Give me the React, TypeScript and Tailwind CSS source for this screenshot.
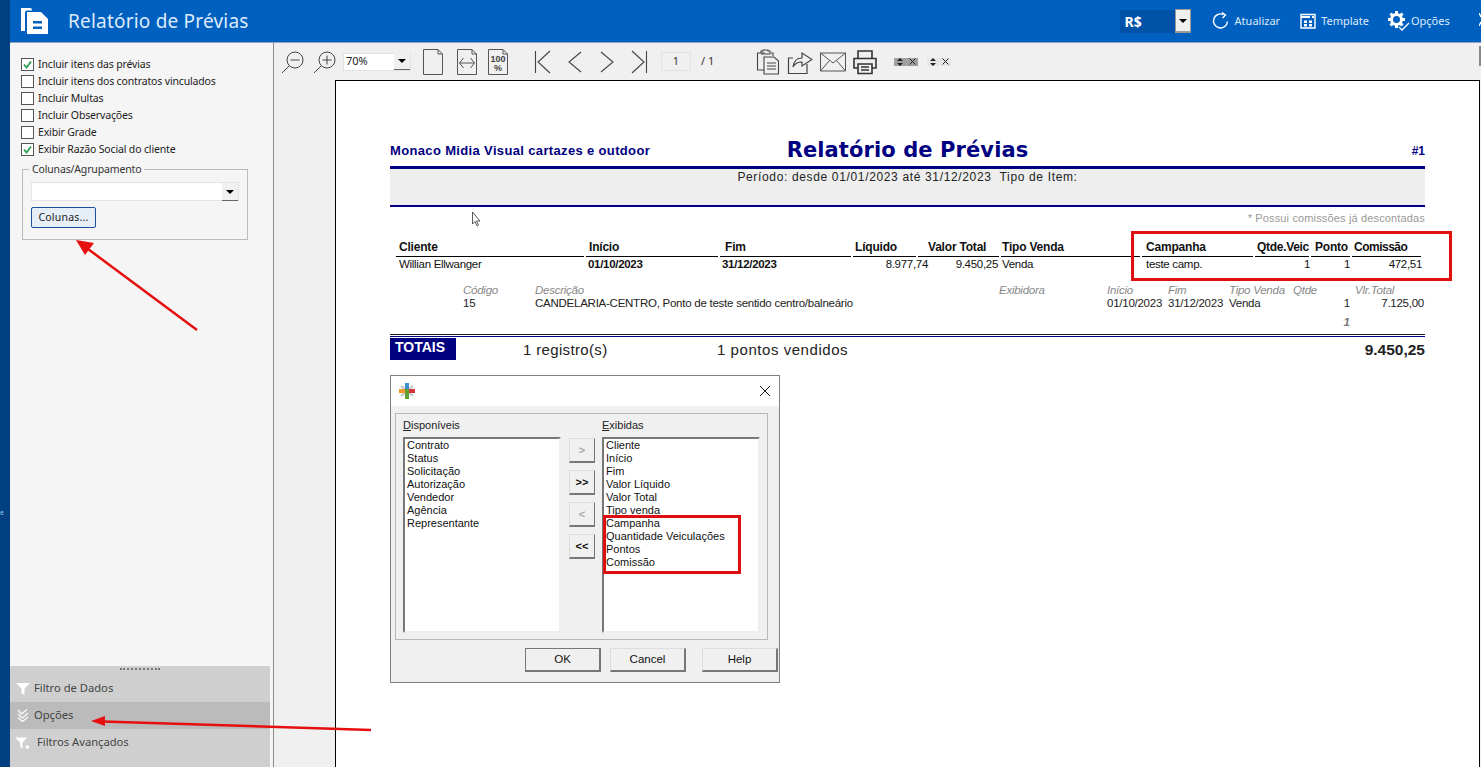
import type { ReactNode } from "react";

const reportCols = "grid-cols-[190px_134px_133px_65px_83px_141px_113px_56px_41px_71px]";
const itemCols = "grid-cols-[72px_464px_108px_61px_61px_64px_62px_69px]";

const options = [
  { label: "Incluir itens das prévias", checked: true },
  { label: "Incluir itens dos contratos vinculados", checked: false },
  { label: "Incluir Multas", checked: false },
  { label: "Incluir Observações", checked: false },
  { label: "Exibir Grade", checked: false },
  { label: "Exibir Razão Social do cliente", checked: true },
];

const available = ["Contrato", "Status", "Solicitação", "Autorização", "Vendedor", "Agência", "Representante"];
const shown = [
  "Cliente",
  "Início",
  "Fim",
  "Valor Líquido",
  "Valor Total",
  "Tipo venda",
  "Campanha",
  "Quantidade Veiculações",
  "Pontos",
  "Comissão",
];

function Check({ label, checked }: { label: string; checked: boolean }) {
  return (
    <div className="flex items-center h-[17px] text-[10.5px] tracking-[-0.15px] text-[#222]">
      <span className="flex items-center justify-center w-[13px] h-[13px] border border-[#555] bg-white mr-[4px]">
        {checked && (
          <svg width="11" height="11" viewBox="0 0 11 11">
            <path d="M2 5.5 L4.5 8.5 L9 2.5" fill="none" stroke="#2e9e4f" strokeWidth="1.8" />
          </svg>
        )}
      </span>
      {label}
    </div>
  );
}

function HeadCell({ children, inset }: { children?: ReactNode; inset?: string }) {
  return (
    <div className="mr-[2px] pl-[3px] h-[17px] leading-[15px] border-b border-black font-bold text-[12px] tracking-[-0.2px] text-[#111] whitespace-nowrap">
      <span className={inset}>{children}</span>
    </div>
  );
}

function Lens({ plus }: { plus?: boolean }) {
  return (
    <svg width="24" height="24" viewBox="0 0 24 24" fill="none" stroke="#444" strokeWidth="1">
      <circle cx="14" cy="10" r="8" />
      <path d="M8 16 L1 23" />
      <path d="M9.5 10 H18.5" />
      {plus && <path d="M14 5.5 V14.5" />}
    </svg>
  );
}

function PageIcon({ children }: { children?: ReactNode }) {
  return (
    <svg width="22" height="28" viewBox="0 0 22 28" fill="none" stroke="#555" strokeWidth="1">
      <path d="M1.5 1.5 H16 L20.5 6 V26.5 H1.5 Z M16 1.5 V6 H20.5" />
      {children}
    </svg>
  );
}

function SortClose({ shade }: { shade: string }) {
  return (
    <div className={`flex items-center justify-center gap-[6px] w-[24px] h-[8px] ${shade}`}>
      <svg width="6" height="8" viewBox="0 0 6 8" fill="#222">
        <path d="M3 0 L6 3 H0 Z M3 8 L0 5 H6 Z" />
      </svg>
      <svg width="7" height="7" viewBox="0 0 7 7" stroke="#222" strokeWidth="1">
        <path d="M.5 .5 L6.5 6.5 M6.5 .5 L.5 6.5" />
      </svg>
    </div>
  );
}

function DialogButton({ children, dim }: { children: ReactNode; dim?: boolean }) {
  return (
    <div
      className={`flex items-center justify-center w-[26px] h-[25px] bg-[#f0f0f0] border border-[#dcdcdc] border-r-[#777] border-b-[#777] border-b-2 text-[11px] font-bold ${dim ? "text-[#aaa]" : "text-[#111]"}`}
    >
      {children}
    </div>
  );
}

function ActionButton({ label, strong }: { label: string; strong?: boolean }) {
  return (
    <div
      className={`flex items-center justify-center w-[76px] h-[24px] bg-[#f0f0f0] border border-[#777] border-r-2 border-b-2 text-[11.5px] text-[#111] ${strong ? "border-[#555]" : "border-t-[#ddd] border-l-[#ddd]"}`}
    >
      {label}
    </div>
  );
}

function ListBox({ title, underlined, rest, items }: { title: string; underlined: string; rest: string; items: string[] }) {
  return (
    <div className="w-[158px] flex flex-col" aria-label={title}>
      <div className="h-[23px] leading-[23px] text-[11px] text-[#222]">
        <span className="underline">{underlined}</span>
        {rest}
      </div>
      <div className="h-[196px] bg-white border-2 border-[#777] border-r-[#eee] border-b-[#eee] pl-[2px]">
        {items.map((item) => (
          <div key={item} className="h-[13px] leading-[13px] text-[11px] text-[#111] whitespace-nowrap">
            {item}
          </div>
        ))}
      </div>
    </div>
  );
}

function AccordionRow({ label, active, icon, indent }: { label: string; active?: boolean; icon: ReactNode; indent?: boolean }) {
  return (
    <div className={`flex items-center h-[27px] pl-[5px] text-[11.2px] text-[#444] ${active ? "bg-[#bbbbbb]" : ""}`}>
      <span className={`flex justify-center w-[15px] ${indent ? "mr-[7px]" : "mr-[4px]"}`}>{icon}</span>
      {label}
    </div>
  );
}

export default function App() {
  return (
    <div className="relative flex w-[1481px] h-[767px] overflow-hidden bg-white font-['Noto_Sans',sans-serif]">
      <div className="w-[10px] bg-[#003f80] pt-[509px] text-[7px] leading-none text-[#9cc4ee]">e</div>

      <div className="flex flex-col flex-1 min-w-0">
        {/* Top bar */}
        <div className="flex items-center h-[43px] bg-[#0060c0] border-b border-[#8fa6bf] text-white">
          <svg className="ml-[11px]" width="28" height="27" viewBox="0 0 28 27">
            <path d="M0 0 H9 Q11 0 11 2 V2.5 H6 Q4 2.5 4 4.5 V23 H0 Z" fill="#fff" />
            <path d="M6 4 H20 L27 11 V26 H6 Z" fill="#fff" />
            <path d="M12 13 H21 V15.5 H12 Z M12 18.5 H21 V21 H12 Z" fill="#0060c0" />
          </svg>
          <div className="ml-[19px] text-[19px] tracking-[0.2px] text-[#dcebfa]">Relatório de Prévias</div>

          <div className="flex items-center h-[23px] w-[55px] ml-[871px] pl-[5px] bg-[#0052a8] text-[14px] font-bold">R$</div>
          <div className="flex items-center justify-center w-[16px] h-[24px] bg-[#f0f0f0] border border-[#999] border-b-2">
            <span className="w-0 h-0 border-x-[4px] border-x-transparent border-t-[4px] border-t-black" />
          </div>

          <svg className="ml-[21px]" width="18" height="18" viewBox="0 0 18 18" fill="none" stroke="#fff" strokeWidth="1.4">
            <path d="M15.5 9.5 A7 7 0 1 1 11.5 2.6" />
            <path d="M10 .5 L13.5 3 L10.5 6" />
          </svg>
          <span className="ml-[5px] text-[11px] text-[#dcebfa]">Atualizar</span>

          <svg className="ml-[20px]" width="16" height="16" viewBox="0 0 16 16">
            <path d="M1 1.5 H15 V15 H1 Z" fill="none" stroke="#fff" strokeWidth="1.4" />
            <path d="M1 3 H10 V5 H1 Z M12 3 H14 V5 H12 Z M4 7.5 H7 V10 H4 Z M9 7.5 H12 V10 H9 Z M4 11 H7 V13.5 H4 Z M9 11 H12 V13.5 H9 Z" fill="#fff" />
          </svg>
          <span className="ml-[5px] text-[11px] text-[#dcebfa]">Template</span>

          <svg className="ml-[18px]" width="23" height="22" viewBox="0 0 23 22">
            <circle cx="9.5" cy="9.5" r="5" fill="none" stroke="#fff" strokeWidth="3" />
            <path
              d="M9.5 1 V4 M9.5 15 V18 M1 9.5 H4 M15 9.5 H18 M3.5 3.5 L5.6 5.6 M13.4 13.4 L15.5 15.5 M15.5 3.5 L13.4 5.6 M5.6 13.4 L3.5 15.5"
              stroke="#fff"
              strokeWidth="3"
            />
            <path d="M12 17 L15 20 L22 13" fill="none" stroke="#fff" strokeWidth="1.3" />
          </svg>
          <span className="ml-[1px] text-[11px] text-[#dcebfa]">Opções</span>

          <svg className="ml-auto mb-[4px]" width="2" height="13" viewBox="0 0 2 13" fill="none" stroke="#fff" strokeWidth="1.4">
            <path d="M0 0 L2 4 M2 9 L0 13" />
          </svg>
        </div>

        <div className="flex flex-1 min-h-0">
          {/* Side panel */}
          <div className="flex flex-col w-[264px] bg-[#f5f5f5] border-r border-[#8c8c8c]">
            <div className="pl-[11px] pt-[13px]">
              {options.map((opt) => (
                <Check key={opt.label} label={opt.label} checked={opt.checked} />
              ))}
              <div className="relative w-[226px] h-[71px] mt-[11px] ml-[1px] border border-[#bbb] pt-[12px] pl-[8px]">
                <span className="absolute -top-[8px] left-[6px] px-[3px] bg-[#f5f5f5] text-[10.5px] tracking-[-0.15px] leading-[14px] text-[#333]">
                  Colunas/Agrupamento
                </span>
                <div className="flex justify-end w-[208px] h-[19px] bg-white border border-[#e4e4e4]">
                  <div className="flex items-center justify-center w-[16px] h-[18px] bg-[#f0f0f0] border-b border-[#666]">
                    <span className="w-0 h-0 border-x-[4px] border-x-transparent border-t-[4px] border-t-black" />
                  </div>
                </div>
                <div className="flex items-center justify-center w-[65px] h-[21px] mt-[6px] rounded-[2px] bg-[#e6eef8] border border-[#1f4f9c] text-[10.5px] text-[#222] tracking-[0.2px]">
                  Colunas...
                </div>
              </div>
            </div>

            <div className="mt-auto w-[260px] h-[101px] bg-[#cfcfcf]">
              <div className="flex justify-center h-[9px] pt-[2px]">
                <span className="w-[40px] h-[2px] border-t-2 border-dotted border-[#777]" />
              </div>
              <AccordionRow
                label="Filtro de Dados"
                icon={
                  <svg width="14" height="13" viewBox="0 0 14 13">
                    <path d="M0 1 H14 L8.5 6.5 V13 L5.5 11 V6.5 Z" fill="#fff" />
                  </svg>
                }
              />
              <AccordionRow
                label="Opções"
                active
                icon={
                  <svg width="12" height="13" viewBox="0 0 12 13" fill="none" stroke="#fff" strokeWidth="1.2">
                    <path d="M1 1 L4.5 5 L10 0.5" />
                    <path d="M1 5 L5.5 9 L11 4" />
                    <path d="M1 8.5 L5.5 12.5 L11 8" />
                  </svg>
                }
              />
              <AccordionRow
                label="Filtros Avançados"
                indent
                icon={
                  <svg width="16" height="14" viewBox="0 0 16 14">
                    <path d="M0 1 H13 L8 6.5 V13 L5.5 11 V6.5 Z" fill="#fff" />
                    <path d="M11 10.5 H15.5 V12 H11 Z M12.5 9 H14 V13.5 H12.5 Z" fill="#fff" />
                  </svg>
                }
              />
            </div>
          </div>

          {/* Viewer */}
          <div className="flex flex-col flex-1 min-w-0 bg-[#f0f0f0]">
            <div className="flex items-center h-[37px] pl-[7px] shrink-0">
              <Lens />
              <span className="ml-[8px]">
                <Lens plus />
              </span>
              <div className="flex items-center justify-between w-[68px] h-[18px] ml-[6px] pl-[2px] bg-white border border-[#e2e2e2] text-[11px] text-[#222]">
                70%
                <span className="flex items-center justify-center w-[16px] h-[17px] bg-[#f0f0f0] border-b border-[#666]">
                  <span className="w-0 h-0 border-x-[4px] border-x-transparent border-t-[4px] border-t-black" />
                </span>
              </div>
              <span className="ml-[11px]">
                <PageIcon />
              </span>
              <span className="ml-[12px]">
                <PageIcon>
                  <path d="M3.5 15 H18.5 M7.5 10 L3.5 15 L7.5 20 M14.5 10 L18.5 15 L14.5 20" />
                </PageIcon>
              </span>
              <span className="relative ml-[9px]">
                <PageIcon />
                <span className="absolute inset-x-0 top-[7px] text-center text-[9px] leading-[9px] font-bold text-[#444] font-['Liberation_Sans',sans-serif]">
                  100
                  <br />%
                </span>
              </span>
              <svg className="ml-[25px]" width="18" height="24" viewBox="0 0 18 24" fill="none" stroke="#444" strokeWidth="1.1">
                <path d="M1.5 1 V23 M16 1 L4 12 L16 23" />
              </svg>
              <svg className="ml-[15px]" width="16" height="24" viewBox="0 0 16 24" fill="none" stroke="#444" strokeWidth="1.1">
                <path d="M14 2 L2 12 L14 22" />
              </svg>
              <svg className="ml-[16px]" width="16" height="24" viewBox="0 0 16 24" fill="none" stroke="#444" strokeWidth="1.1">
                <path d="M2 2 L14 12 L2 22" />
              </svg>
              <svg className="ml-[15px]" width="18" height="24" viewBox="0 0 18 24" fill="none" stroke="#444" strokeWidth="1.1">
                <path d="M16.5 1 V23 M2 1 L14 12 L2 23" />
              </svg>
              <div className="flex items-center justify-center w-[30px] h-[19px] ml-[13px] border border-[#e2e2e2] text-[11px] text-[#333]">1</div>
              <span className="ml-[10px] text-[11px] text-[#333]">/ 1</span>

              <svg className="ml-[42px]" width="24" height="26" viewBox="0 0 24 26" fill="none" stroke="#444" strokeWidth="1.1">
                <path d="M9 4 H1.5 V21 H8" />
                <path d="M5 4 V2 H7 V1 H12 V2 H14 V5 H5 M15 4 H17 V7" />
                <path d="M8 8 H18 L22.5 12 V25 H8 Z M11 14 H20 M11 17 H20 M11 20 H20" />
              </svg>
              <svg className="ml-[7px]" width="26" height="26" viewBox="0 0 26 26" fill="none" stroke="#444" strokeWidth="1.2">
                <path d="M6 9 H1.5 V24.5 H20 V15" />
                <path d="M6 18 C7 11 11 9 15 9 V4 L25 10.5 L15 17 V13 C11 13 8 14 6 18 Z" />
              </svg>
              <svg className="ml-[7px]" width="26" height="20" viewBox="0 0 26 20" fill="none" stroke="#555" strokeWidth="1">
                <path d="M.5 1 H25.5 V19 H.5 Z M.5 1 L13 11 L25.5 1 M.5 19 L9.5 8.5 M25.5 19 L16.5 8.5" />
              </svg>
              <svg className="ml-[6px]" width="26" height="26" viewBox="0 0 26 26" fill="none" stroke="#333" strokeWidth="1.6">
                <path d="M6 9 V2 H20 V9" />
                <path d="M6 19 H2 V9.5 H24 V19 H20" />
                <path d="M6 15 H20 V24.5 H6 Z M9 18 H17 M9 21 H17" />
              </svg>

              <span className="ml-[16px]">
                <SortClose shade="bg-[#a0a0a0]" />
              </span>
              <span className="ml-[9px]">
                <SortClose shade="bg-[#e6e6e6]" />
              </span>
              <span className="ml-auto w-[2px] h-[20px] -mt-[12px] bg-[#8a8a8a]" />
            </div>

            {/* Report page */}
            <div className="flex-1 ml-[61px] mr-[1px] bg-white border-l border-t border-r border-black pl-[54px] pt-[53px] min-h-0">
              <div className="w-[1035px] font-['Liberation_Sans',sans-serif]">
                <div className="grid grid-cols-[1fr_auto_1fr] items-start h-[32px] text-[#000080]">
                  <div className="text-[13px] leading-[18px] mt-[8px] font-bold tracking-[0.35px]">Monaco Midia Visual cartazes e outdoor</div>
                  <div className="font-['DejaVu_Sans',sans-serif] text-[21px] leading-[28px] mt-[2px] font-bold tracking-[0.1px] text-[#000080]">Relatório de Prévias</div>
                  <div className="text-right text-[12px] leading-[18px] mt-[8px] font-bold">#1</div>
                </div>
                <div className="h-[41px] bg-[#eeeeee] border-t-[3px] border-b-[2px] border-[#000080] text-center text-[12px] leading-[17px] tracking-[0.65px] text-[#222]">
                  Período: desde 01/01/2023 até 31/12/2023 &nbsp;Tipo de Item:
                </div>
                <div className="h-[26px] pt-[4px] text-right text-[11px] leading-[14px] tracking-[0.15px] text-[#999]">* Possui comissões já descontadas</div>

                <div className={`grid ${reportCols} ml-[6px] mt-[7px]`}>
                  <HeadCell>Cliente</HeadCell>
                  <HeadCell>Início</HeadCell>
                  <HeadCell inset="ml-[2px]">Fim</HeadCell>
                  <HeadCell>
                    <span className="-ml-[1px]">Líquido</span>
                  </HeadCell>
                  <HeadCell inset="ml-[7px]">Valor Total</HeadCell>
                  <HeadCell>
                    <span className="-ml-[2px]">Tipo Venda</span>
                  </HeadCell>
                  <HeadCell inset="ml-[1px]">Campanha</HeadCell>
                  <HeadCell>
                    <span className="-ml-[1px] tracking-[-0.3px]">Qtde.Veic</span>
                  </HeadCell>
                  <HeadCell inset="ml-[1px]">Ponto</HeadCell>
                  <HeadCell>
                    <span className="-ml-[1px] tracking-[-0.5px]">Comissão</span>
                  </HeadCell>
                </div>
                <div className={`grid ${reportCols} ml-[6px] h-[14px] -mt-[1px] items-center text-[11.5px] tracking-[-0.3px] text-[#111]`}>
                  <div className="pl-[3px]">Willian Ellwanger</div>
                  <div className="pl-[2px] font-bold">01/10/2023</div>
                  <div className="pl-[2px] font-bold">31/12/2023</div>
                  <div className="text-right -mr-[10px]">8.977,74</div>
                  <div className="text-right mr-[3px]">9.450,25</div>
                  <div className="pl-[1px]">Venda</div>
                  <div className="pl-[4px]">teste camp.</div>
                  <div className="text-right mr-[1px]">1</div>
                  <div className="text-right mr-[2px]">1</div>
                  <div className="text-right mr-[1px]">472,51</div>
                </div>

                <div className={`grid ${itemCols} ml-[73px] mt-[14px] text-[11.5px] leading-[13px] tracking-[-0.25px]`}>
                  <div className="italic text-[#888]">Código</div>
                  <div className="italic text-[#888]">Descrição</div>
                  <div className="italic text-[#888]">Exibidora</div>
                  <div className="italic text-[#888]">Início</div>
                  <div className="italic text-[#888]">Fim</div>
                  <div className="italic text-[#888]">Tipo Venda</div>
                  <div className="italic text-[#888]">Qtde</div>
                  <div className="italic text-[#888]">Vlr.Total</div>
                  <div className="text-[#222]">15</div>
                  <div className="col-span-2 text-[#222]">CANDELARIA-CENTRO, Ponto de teste sentido centro/balneário</div>
                  <div className="text-[#222]">01/10/2023</div>
                  <div className="text-[#222]">31/12/2023</div>
                  <div className="text-[#222]">Venda</div>
                  <div className="text-right text-[#222] mr-[5px]">1</div>
                  <div className="text-right text-[#222]">7.125,00</div>
                </div>
                <div className="h-[14px] mt-[5px] pr-[75px] text-right text-[11.5px] leading-[14px] font-bold italic text-[#777]">1</div>

                {/* Totals */}
                <div className="mt-[5px] border-t border-b border-t-[#222] border-b-[#000080] h-[3px]" />
                <div className="flex items-start h-[38px] pt-[1px]">
                  <div className="w-[66px] h-[22px] bg-[#000080] pl-[5px] text-[14px] leading-[19px] font-bold text-white">TOTAIS</div>
                  <div className="ml-[67px] mt-[3px] w-[194px] text-[15px] leading-[18px] tracking-[0.35px] text-[#222]">1 registro(s)</div>
                  <div className="mt-[3px] text-[15px] leading-[18px] tracking-[0.55px] text-[#222]">1 pontos vendidos</div>
                  <div className="ml-auto mt-[3px] text-[15.5px] leading-[18px] font-bold text-[#222]">9.450,25</div>
                </div>

                {/* Columns dialog */}
                <div className="flex flex-col w-[390px] h-[308px] bg-[#f0f0f0] border border-[#808080]">
                  <div className="flex items-center justify-between h-[30px] bg-white pl-[8px] pr-[8px] shrink-0">
                    <svg width="16" height="16" viewBox="0 0 16 16">
                      <path d="M2 3 L14 13 M14 3 L2 13" stroke="#ccc" strokeWidth="2.5" />
                      <path d="M6 0 H10 V6 H6 Z" fill="#3a8fd0" />
                      <path d="M0 6 H6 V10 H0 Z" fill="#ef9a2e" />
                      <path d="M10 6 H16 V10 H10 Z" fill="#d23a3a" />
                      <path d="M6 6 H10 V16 H6 Z" fill="#5fa032" />
                    </svg>
                    <svg width="12" height="12" viewBox="0 0 12 12" stroke="#222" strokeWidth="1">
                      <path d="M1 1 L11 11 M11 1 L1 11" />
                    </svg>
                  </div>
                  <div className="flex w-[373px] h-[227px] ml-[4px] mt-[7px] pl-[7px] border border-[#b8b8b8] text-[#111]">
                    <ListBox title="Disponíveis" underlined="D" rest="isponíveis" items={available} />
                    <div className="flex flex-col gap-[7px] w-[26px] ml-[8px] mt-[24px]">
                      <DialogButton dim>&gt;</DialogButton>
                      <DialogButton>&gt;&gt;</DialogButton>
                      <DialogButton dim>&lt;</DialogButton>
                      <DialogButton>&lt;&lt;</DialogButton>
                    </div>
                    <div className="ml-[7px]">
                      <ListBox title="Exibidas" underlined="E" rest="xibidas" items={shown} />
                    </div>
                  </div>
                  <div className="flex mt-[8px] ml-[134px]">
                    <ActionButton label="OK" strong />
                    <span className="ml-[9px]">
                      <ActionButton label="Cancel" />
                    </span>
                    <span className="ml-[16px]">
                      <ActionButton label="Help" />
                    </span>
                  </div>
                </div>
              </div>
            </div>
          </div>
        </div>
      </div>

      {/* Red annotations drawn over the screenshot */}
      <svg className="absolute inset-0 pointer-events-none" width="1481" height="767" viewBox="0 0 1481 767">
        <rect x="1132.5" y="232.5" width="318" height="47" fill="none" stroke="#e00f0f" strokeWidth="3" />
        <rect x="604.5" y="516.5" width="135" height="56" fill="none" stroke="#e00f0f" strokeWidth="3" />
        <path d="M197 330 L88 249" stroke="#e60f0f" strokeWidth="2.5" />
        <path d="M76 240 L94 243 L85 255 Z" fill="#e60f0f" />
        <path d="M371 730 L103 721.5" stroke="#e60f0f" strokeWidth="2.5" />
        <path d="M91 721 L105 716 L105 726 Z" fill="#e60f0f" />
        <path
          d="M472.5 212 V224 L475 221.5 L477 226 L478.5 225 L476.5 221 H480 Z"
          fill="#fff"
          stroke="#333"
          strokeWidth="0.8"
        />
      </svg>
    </div>
  );
}
